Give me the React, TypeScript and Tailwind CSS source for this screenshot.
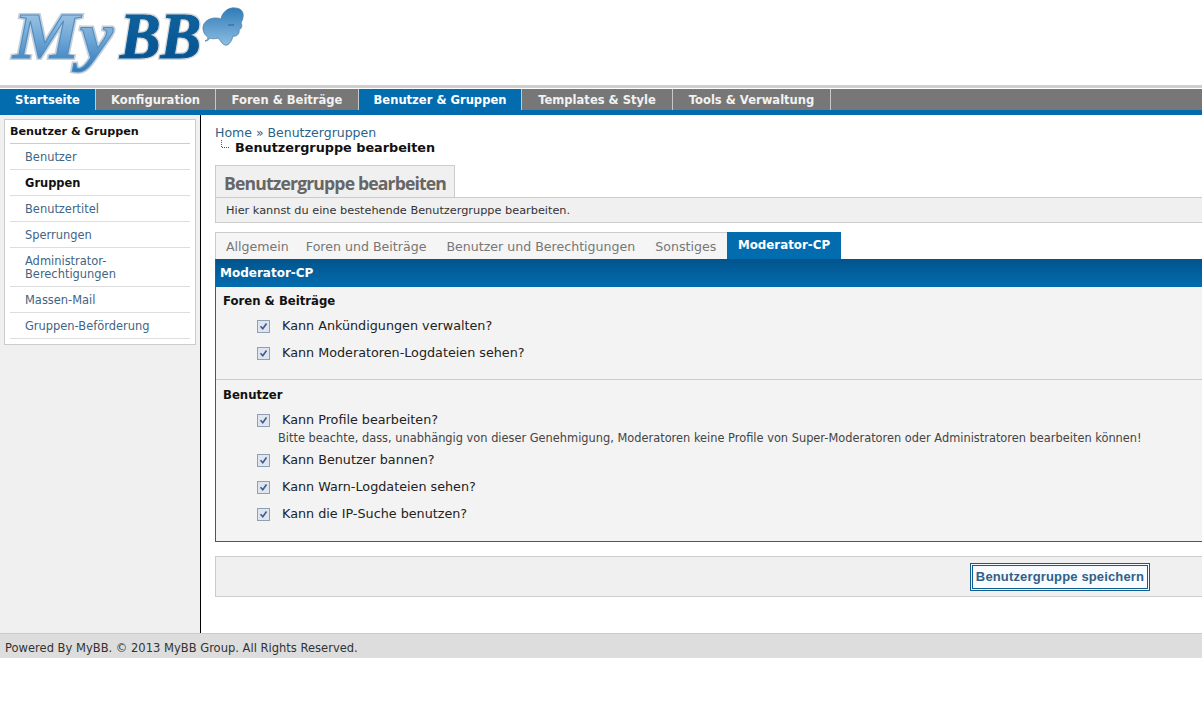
import React from "react";

const V = "font-['DejaVu_Sans','Verdana',sans-serif]";

function Logo() {
  const serif = "'Liberation Serif',serif";
  return (
    <svg width="250" height="80" viewBox="0 0 250 80" className="block">
      <defs>
        <linearGradient id="my" x1="0" y1="0" x2="0" y2="1">
          <stop offset="0" stopColor="#b4d2ea" />
          <stop offset="0.55" stopColor="#6ea6d6" />
          <stop offset="1" stopColor="#2f78b8" />
        </linearGradient>
        <linearGradient id="bb" x1="0" y1="0" x2="0" y2="1">
          <stop offset="0" stopColor="#12669f" />
          <stop offset="1" stopColor="#03508f" />
        </linearGradient>
        <linearGradient id="cl" x1="0" y1="0" x2="0" y2="1">
          <stop offset="0" stopColor="#2f7cb8" />
          <stop offset="1" stopColor="#8dbde2" />
        </linearGradient>
      </defs>
      <text x="13" y="58" fontFamily={serif} fontWeight="700" fontStyle="italic" fontSize="66" fill="none" stroke="#c5d0da" strokeWidth="4" textLength="100" lengthAdjust="spacingAndGlyphs">My</text>
      <text x="13" y="58" fontFamily={serif} fontWeight="700" fontStyle="italic" fontSize="66" fill="url(#my)" stroke="#4f8dc2" strokeWidth="1" textLength="100" lengthAdjust="spacingAndGlyphs">My</text>
      <text x="120" y="58" fontFamily={serif} fontWeight="700" fontStyle="italic" fontSize="66" fill="none" stroke="#d3d6da" strokeWidth="4" textLength="81" lengthAdjust="spacingAndGlyphs">BB</text>
      <text x="120" y="58" fontFamily={serif} fontWeight="700" fontStyle="italic" fontSize="66" fill="url(#bb)" stroke="#0b5c98" strokeWidth="1.2" textLength="81" lengthAdjust="spacingAndGlyphs">BB</text>
      <path d="M208 37c-2-1-5-4-5-9 0-6 6-10 12-10 2 0 4 0 6 1 1-7 8-12 14-11 6 0 9 4 8 9 0 3-2 5-2 6 2 3 0 6-2 7 1 4-3 7-6 6-1 4-3 8-6 9-4 1-6-4-9-7-3 1-6 1-8 0-1 2-3 3-5 3 2-1 3-2 3-4z" fill="url(#cl)" stroke="#4d7ea8" strokeWidth="0.8" />
      <path d="M228 25h6" stroke="#2b5f8e" strokeWidth="1" />
    </svg>
  );
}

const tabs = [
  ["Startseite", false, "w-[96px]"],
  ["Konfiguration", false, "w-[120px]"],
  ["Foren & Beiträge", false, "w-[143px]"],
  ["Benutzer & Gruppen", true, "w-[163px]"],
  ["Templates & Style", false, "w-[151px]"],
  ["Tools & Verwaltung", false, "w-[158px]"],
] as const;

const side = [
  ["Benutzer", false],
  ["Gruppen", true],
  ["Benutzertitel", false],
  ["Sperrungen", false],
  ["Administrator-\nBerechtigungen", false],
  ["Massen-Mail", false],
  ["Gruppen-Beförderung", false],
] as const;

function Check({ label, note }: { label: string; note?: string }) {
  return (
    <div className="pl-[34px]">
      <div className="flex items-center h-[27px]">
        <span className="w-[13px] h-[13px] ml-[7px] border border-[#8f9fb4] bg-[#dfe5ee] flex items-center justify-center">
          <svg width="9" height="9" viewBox="0 0 9 9"><path d="M1.5 4.2l2.3 2.6 3.7-5.3" fill="none" stroke="#3f5a8a" strokeWidth="1.6" /></svg>
        </span>
        <span className="ml-[12px] pb-[2px] text-[12.75px] text-[#222]">{label}</span>
      </div>
      {note && <div className="ml-[28px] -mt-[2px] mb-[2px] text-[11.4px] leading-[13px] text-[#444] whitespace-nowrap">{note}</div>}
    </div>
  );
}

export default function App() {
  return (
    <div className={`${V} bg-white w-[1202px] h-[715px] overflow-hidden`}>
      <div className="h-[85px] overflow-hidden"><Logo /></div>
      <div className="h-[4px] bg-white border-t-[3px] border-[#cfcfcf]" />
      <div className="h-[21px] flex bg-[#777] text-[11.55px] font-bold">
        {tabs.map(([t, a, w], i) => (
          <div
            key={t}
            className={`${w} h-full pt-[2px] flex items-center justify-center border-r border-[#c8c8c8] ${a || i === 0 ? "bg-[#026caf] text-white" : "bg-[#777] text-[#f2f2f2]"}`}
          >
            {t}
          </div>
        ))}
      </div>
      <div className="h-[5px] bg-[#026caf]" />
      <div className="flex h-[518px]">
        <div className="w-[201px] shrink-0 bg-[#f0f0f0] border-r border-black pt-[4px] pl-[4px] pr-[4px]">
          <div className="w-[192px] bg-white border border-[#ccc] px-[5px] h-[226px]">
            <div className="h-[24px] pt-[1px] flex items-center text-[11.2px] font-bold text-[#111] border-b border-[#ccc]">Benutzer & Gruppen</div>
            {side.map(([t, a]) => (
              <div
                key={t}
                className={`pl-[15px] border-b border-[#ddd] whitespace-pre-line text-[11.45px] leading-[13px] ${a ? "font-bold text-[#111]" : "text-[#3f6584]"} ${t.includes("\n") ? "pt-[7px] pb-[5px]" : "h-[26px] pt-[2px] flex items-center"}`}
              >
                {t}
              </div>
            ))}
          </div>
        </div>
        <div className="flex-1 min-w-0 pl-[14px] pt-[10px]">
          <div className="text-[12.5px] leading-[15px] text-[#2b6287]">Home » Benutzergruppen</div>
          <div className="flex items-start h-[25px]">
            <svg width="20" height="12" className="shrink-0"><path d="M6.5 0v7.5H15" fill="none" stroke="#555" strokeDasharray="1 1" /></svg>
            <span className="text-[12.8px] leading-[15px] font-bold text-[#111]">Benutzergruppe bearbeiten</span>
          </div>
          <div className="w-[240px] h-[32px] pt-[3px] bg-[#f0f0f0] border border-b-0 border-[#ccc] flex items-center pl-[8px] font-['Open_Sans',sans-serif] font-bold text-[17.6px] tracking-[-0.85px] text-[#666]">
            Benutzergruppe bearbeiten
          </div>
          <div className="h-[26px] pt-[2px] bg-[#f0f0f0] border-y border-l border-[#ccc] flex items-center pl-[10px] text-[11.3px] text-[#333]">
            Hier kannst du eine bestehende Benutzergruppe bearbeiten.
          </div>
          <div className="mt-[9px] h-[27px] flex bg-white text-[12.6px] text-[#777]">
            <div className="w-[512px] pt-[2px] flex items-center bg-[#f5f5f5] border-t border-l border-[#ccc]">
              <span className="ml-[10px]">Allgemein</span>
              <span className="ml-[17px]">Foren und Beiträge</span>
              <span className="ml-[20px]">Benutzer und Berechtigungen</span>
              <span className="ml-[20px]">Sonstiges</span>
            </div>
            <div className="w-[114px] pt-[1px] bg-[#026caf] text-white font-bold text-[11.85px] flex items-center justify-center">Moderator-CP</div>
          </div>
          <div className="border-l border-b border-[#0f6aa3] bg-[#f3f3f3] h-[283px]">
            <div className="h-[28px] bg-gradient-to-b from-[#02548c] to-[#026caf] text-white font-bold text-[12px] flex items-center pl-[4px]">Moderator-CP</div>
            <div className="h-[93px] border-b border-[#ccc] pt-[6px]">
              <div className="pl-[7px] text-[11.7px] leading-[16px] font-bold text-[#111] mb-[4px]">Foren & Beiträge</div>
              <Check label="Kann Ankündigungen verwalten?" />
              <Check label="Kann Moderatoren-Logdateien sehen?" />
            </div>
            <div className="pt-[7px]">
              <div className="pl-[7px] text-[11.7px] leading-[16px] font-bold text-[#111] mb-[4px]">Benutzer</div>
              <Check
                label="Kann Profile bearbeiten?"
                note="Bitte beachte, dass, unabhängig von dieser Genehmigung, Moderatoren keine Profile von Super-Moderatoren oder Administratoren bearbeiten können!"
              />
              <Check label="Kann Benutzer bannen?" />
              <Check label="Kann Warn-Logdateien sehen?" />
              <Check label="Kann die IP-Suche benutzen?" />
            </div>
          </div>
          <div className="mt-[14px] h-[41px] bg-[#f0f0f0] border-y border-l border-[#ccc] flex items-center justify-end pr-[52px]">
            <div className="w-[180px] h-[28px] bg-[#f8fbff] border-[3px] border-double border-[#0f5c8f] flex items-center justify-center font-['Liberation_Sans',sans-serif] font-bold text-[13px] tracking-[0.15px] text-[#2f6189]">
              Benutzergruppe speichern
            </div>
          </div>
        </div>
      </div>
      <div className="h-[25px] bg-[#ddd] border-t border-[#ccc] pt-[5px] flex items-center pl-[5px] text-[11.52px] text-[#333]">
        Powered By MyBB. © 2013 MyBB Group. All Rights Reserved.
      </div>
    </div>
  );
}
